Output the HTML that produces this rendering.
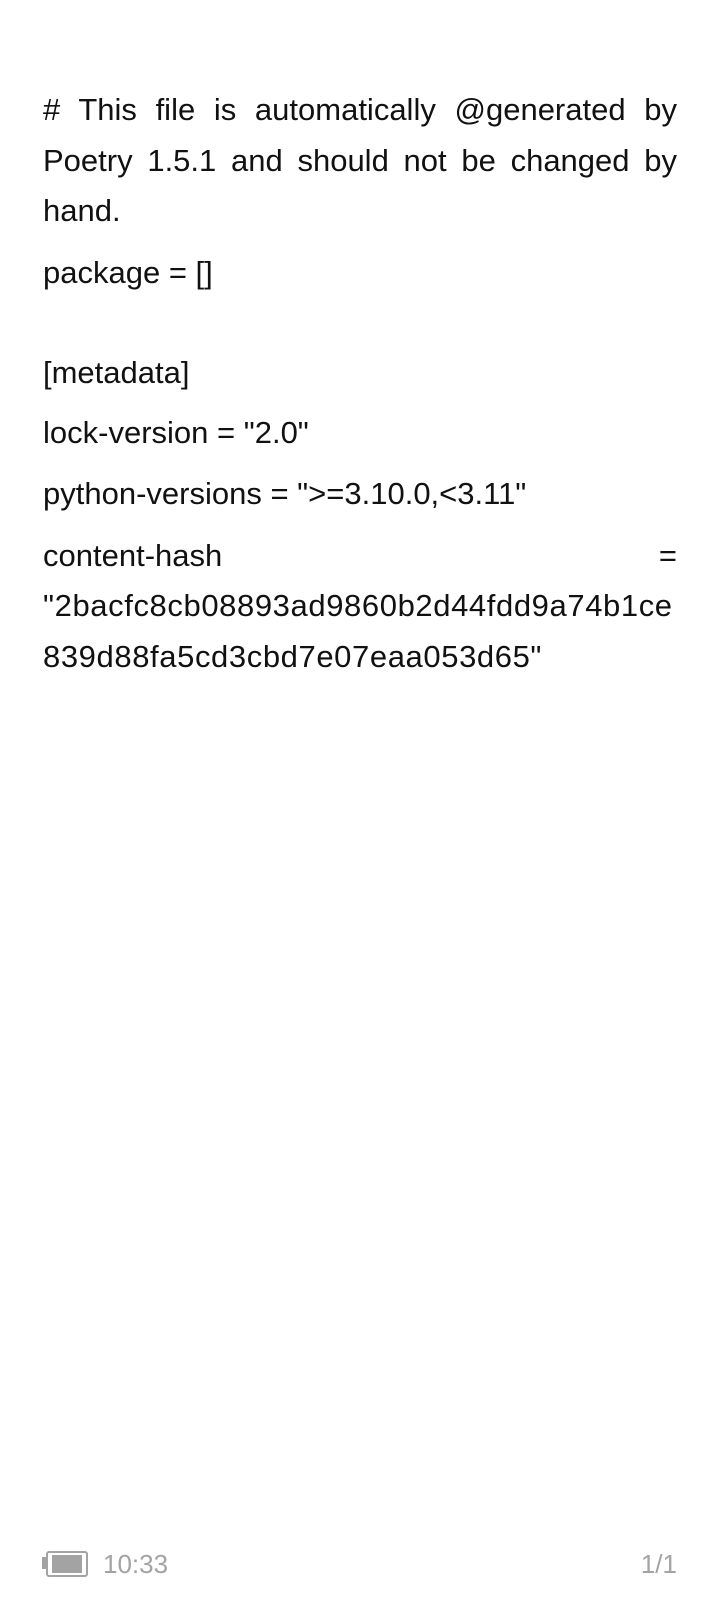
<!DOCTYPE html>
<html><head><meta charset="utf-8"><style>
html,body{margin:0;padding:0;background:#fff;}
body{width:720px;height:1612px;position:relative;overflow:hidden;font-family:"Liberation Sans",sans-serif;color:#111;}
.l{position:absolute;left:43px;width:634px;font-size:31px;line-height:50px;height:50px;white-space:nowrap;}
.j{text-align:justify;text-align-last:justify;white-space:normal;}
.h{letter-spacing:0.6px;}
.s{position:absolute;top:1547px;font-size:26px;line-height:34px;color:#a3a3a3;}
</style></head><body>
<div class="l j" style="top:85px">#  This file is automatically @generated by</div>
<div class="l j" style="top:136px">Poetry 1.5.1 and should not be changed by</div>
<div class="l" style="top:186px">hand.</div>
<div class="l" style="top:248px">package = []</div>
<div class="l" style="top:348px">[metadata]</div>
<div class="l" style="top:408px">lock-version = "2.0"</div>
<div class="l" style="top:469px">python-versions = "&gt;=3.10.0,&lt;3.11"</div>
<div class="l j" style="top:531px">content-hash =</div>
<div class="l h" style="top:581px">"2bacfc8cb08893ad9860b2d44fdd9a74b1ce</div>
<div class="l h" style="top:632px">839d88fa5cd3cbd7e07eaa053d65"</div>
<div style="position:absolute;left:42px;top:1557px;width:4px;height:12px;background:#a3a3a3"></div>
<div style="position:absolute;left:46px;top:1551px;width:38px;height:22px;border:2px solid #a3a3a3;border-radius:3px"></div>
<div style="position:absolute;left:52px;top:1555px;width:30px;height:18px;background:#a3a3a3"></div>
<div class="s" style="left:103px">10:33</div>
<div class="s" style="right:43px">1/1</div>
</body></html>
